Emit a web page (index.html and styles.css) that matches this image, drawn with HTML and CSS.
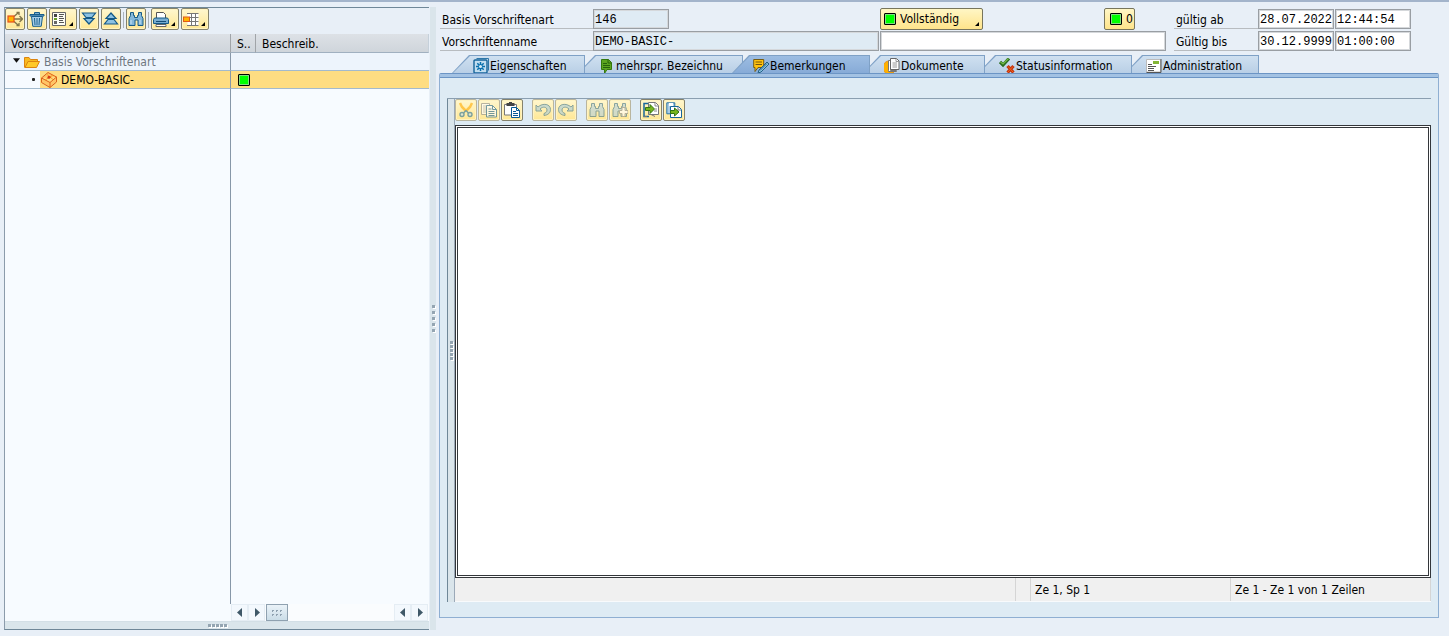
FILE: index.html
```html
<!DOCTYPE html>
<html lang="de">
<head>
<meta charset="utf-8">
<title>Vorschriften</title>
<link rel="stylesheet" href="styles.css">
</head>
<body>
<main class="app">
  <section class="tree-pane">
    <div class="tree-frame">
      <div class="tree-toolbar">
        <button class="tool" aria-label="Verschieben"><svg viewBox="0 0 16 16"><path d="M7 5.500L11 2M9.500 1.500H12V4M7 8h8M12.500 5L15.500 8l-3 3M7 10.500l4 3.500M9.500 14.500H12V12" fill="none" stroke="#80754a" stroke-width="1.300"/><rect x="1" y="5" width="6" height="6" fill="#ffb400" stroke="#e8501c" stroke-width="1.200"/></svg></button>
        <button class="tool" aria-label="Löschen"><svg viewBox="0 0 16 16"><path d="M2.500 5.500h11l-1.300 9.800H3.800z" fill="#a9d0ea" stroke="#185f8c"/><path d="M1 3.500h14v1.500H1zM5.500 3.500v-2h5v2" fill="#7db0d3" stroke="#185f8c"/><path d="M5.500 7l.5 7M8 7v7M10.500 7l-.5 7" stroke="#185f8c" fill="none"/></svg></button>
        <button class="tool tool-menu" aria-label="Legende"><svg viewBox="0 0 16 16"><path d="M1.500 1.500h13v13h-13z" fill="#fdfdf5" stroke="#666"/><path d="M3 3h3v3H3z" fill="#444"/><path d="M3 7h3v2H3z" fill="#68a026"/><path d="M3 10h3v3H3z" fill="#666"/><path d="M8 3.500h5M8 5.500h4M8 7.500h5M8 9.500h4M8 11.500h5" stroke="#555"/></svg></button>
        <button class="tool" aria-label="Alles expandieren"><svg viewBox="0 0 16 16"><path d="M1.500 2h13l-3.500 4.500H5z M3 7.500h10L8 13z" fill="#8cc2e4" stroke="#145987" stroke-width="1.200"/></svg></button>
        <button class="tool" aria-label="Alles komprimieren"><svg viewBox="0 0 16 16"><path d="M8 2l5 5.500H3z M5 8.500h6l3.500 4.500h-13z" fill="#8cc2e4" stroke="#145987" stroke-width="1.200"/></svg></button>
        <span class="separator"></span>
        <button class="tool" aria-label="Suchen"><svg viewBox="0 0 16 16"><path d="M2.500 1.500h3v3h1v2h3v-2h1v-3h3v3l1.500 3v7h-5V9h-3v5.500H1v-7l1.500-3z" fill="#83b7da" stroke="#155a87"/><path d="M3 9v4M12 9v4" stroke="#c9e3f3"/></svg></button>
        <span class="separator"></span>
        <button class="tool tool-menu" aria-label="Drucken"><svg viewBox="0 0 16 16"><path d="M3.500 7V1.500h7l2 2V7" fill="#fff" stroke="#555"/><path d="M1.500 7h13l1 1.500v4H.5v-4z" fill="#78acd0" stroke="#155a87"/><path d="M3 10.500h10" stroke="#164d75"/><path d="M3 13.500h10v2H3z" fill="#fff" stroke="#666"/></svg></button>
        <button class="tool tool-menu" aria-label="Layout"><svg viewBox="0 0 16 16"><path d="M4.500 2.500h11v12h-11z" fill="#fff"/><path d="M4 2.500h11.500M6 6.500h9.500M6 10.500h9.500M4 14.500h11.500M8.500 2v13M12.500 2v13" stroke="#777" fill="none"/><rect x=".5" y="6" width="6" height="4.500" fill="#ffb400" stroke="#e05a1c"/></svg></button>
      </div>
      <table class="tree">
        <colgroup><col class="col-object"><col class="col-status"><col></colgroup>
        <thead><tr><th>Vorschriftenobjekt</th><th>S..</th><th>Beschreib.</th></tr></thead>
        <tbody>
          <tr><td><span class="node node-root"><svg class="caret" viewBox="0 0 8 5"><path d="M0 0h8L4 5z" fill="#111"/></svg><svg class="icon" viewBox="0 0 16 16"><path d="M.5 13.500v-10H5l1.500 2h7v2" fill="#f9b91f" stroke="#dc8410"/><path d="M1 13.500l3-6h11.500l-3 6z" fill="#ffc928" stroke="#dc8410"/></svg>Basis Vorschriftenart</span></td><td></td><td></td></tr>
          <tr class="selected"><td><span class="node node-leaf"><span class="dot"></span><span class="leaf-body"><svg class="icon" viewBox="0 0 16 16"><path d="M.5 6L7 .5 15.500 5 9 10.500zM.5 6v4.500L9 15.500l6.500-5.500V5M9 10.500v5" fill="#ffc566" stroke="#db621b"/><path d="M6 2.500l6 5M12 3L4 8" stroke="#f39a27"/><circle cx="8" cy="5.300" r="1.500" fill="#d63c15"/></svg>DEMO-BASIC-</span></span></td><td><span class="lamp"></span></td><td></td></tr>
        </tbody>
      </table>
      <div class="tree-space"><div class="tree-space-object"></div><div class="tree-space-rest"></div></div>
      <div class="tree-scroll">
        <div class="scroll-gap"></div>
        <button class="arrow" aria-label="Nach links"><svg viewBox="0 0 6 9"><path d="M5 0v9L0 4.500z"/></svg></button>
        <button class="arrow" aria-label="Nach rechts"><svg viewBox="0 0 6 9"><path d="M1 0v9l5-4.500z"/></svg></button>
        <span class="thumb"><i></i><i></i><i></i><i></i><i></i><i></i></span>
        <span class="track"></span>
        <button class="arrow" aria-label="Ende links"><svg viewBox="0 0 6 9"><path d="M5 0v9L0 4.500z"/></svg></button>
        <button class="arrow" aria-label="Ende rechts"><svg viewBox="0 0 6 9"><path d="M1 0v9l5-4.500z"/></svg></button>
      </div>
      <div class="split-bottom"><span class="grip grip-row"><i></i><i></i><i></i><i></i><i></i></span></div>
    </div>
  </section>
  <div class="split-main"><span class="grip grip-column"><i></i><i></i><i></i><i></i><i></i></span></div>
  <section class="detail">
    <form class="head">
      <label class="caption" for="type">Basis Vorschriftenart</label>
      <input class="field locked short" id="type" value="146" readonly>
      <div class="actions">
        <button type="button" class="action action-state"><span class="lamp"></span>Vollständig</button>
        <button type="button" class="action action-count"><span class="lamp"></span>0</button>
      </div>
      <label class="caption" for="from">gültig ab</label>
      <input class="field spaced" id="from" value="28.07.2022">
      <input class="field" value="12:44:54" aria-label="Uhrzeit ab">
      <label class="caption" for="name">Vorschriftenname</label>
      <input class="field locked spaced" id="name" value="DEMO-BASIC-" readonly>
      <input class="field description" aria-label="Beschreibung">
      <label class="caption" for="to">Gültig bis</label>
      <input class="field spaced" id="to" value="30.12.9999">
      <input class="field" value="01:00:00" aria-label="Uhrzeit bis">
    </form>
    <nav class="tabs" role="tablist">
      <button class="tab tab-properties" role="tab"><svg class="icon" viewBox="0 0 16 16"><path d="M3.500.5h12v12" fill="none" stroke="#2d77a8"/><rect x="1" y="2" width="13" height="13" rx="1" fill="#c3def0" stroke="#14649a" stroke-width="1.400"/><path d="M7.500 4v9M3 8.500h9M4.300 5.300l6.400 6.400M10.700 5.300l-6.400 6.400" stroke="#0870ae" stroke-width="1.500"/><circle cx="7.500" cy="8.500" r="1.500" fill="#d9ecf7"/></svg>Eigenschaften</button>
      <button class="tab tab-names" role="tab"><svg class="icon" viewBox="0 0 16 16"><path d="M2.500 1.500h7l3 3v7H8l-2.500 4v-4h-3z" fill="#5ca51f" stroke="#34790d"/><path d="M9 1.500v3.500h3.500M4 5.500h4M4 7.500h7M4 9.500h7" stroke="#26630b" fill="none"/></svg>mehrspr. Bezeichnu</button>
      <button class="tab tab-notes active" role="tab" aria-selected="true"><svg class="icon" viewBox="0 0 16 16"><path d="M.7 1.500h10v8H5l-3 4v-4H.7z" fill="#ffc20e" stroke="#765c14"/><path d="M2.500 4h6.500M2.500 6.500h6.500" stroke="#76560b"/><path d="M14 4l2 2-8 8-3 1 1-3z" fill="#8cc5e4" stroke="#246085"/><path d="M7 12.500l7-7" stroke="#246085"/></svg>Bemerkungen</button>
      <button class="tab tab-documents" role="tab"><svg class="icon" viewBox="0 0 16 16"><path d="M5 3a6.500 6.500 0 1 0 5 11H5z" fill="#ffb000" stroke="#e5931c"/><path d="M4.500 12.500v-10h2v10h6v1h-8z" fill="#fff" stroke="#777"/><path d="M6.500.5h6l2.500 2.500v8.500H6.500z" fill="#fff" stroke="#666"/><path d="M12 1v2.500h3M8.500 5h4.500M8.500 7h4.500M8.500 9h4.500" fill="none" stroke="#999"/></svg>Dokumente</button>
      <button class="tab tab-status" role="tab"><svg class="icon" viewBox="0 0 16 16"><path d="M1 4l3 3 6-6.500" fill="none" stroke="#286b20" stroke-width="3.200"/><path d="M1.500 4l2.500 2 5.500-5.500" fill="none" stroke="#73b947" stroke-width="1.300"/><path d="M8.500 8l6 6.500M14.500 8l-6 6.500" stroke="#c5330b" stroke-width="3.200"/><path d="M9 8.500l5 5.500M14 8.500l-5 5.500" stroke="#ee6420"/></svg>Statusinformation</button>
      <button class="tab tab-admin" role="tab"><svg class="icon" viewBox="0 0 16 16"><path d="M.5 1.500h14v12.500H.5z" fill="#fff" stroke="#bbb"/><path d="M.5 14.500h14.500V1" fill="none" stroke="#555"/><path d="M7 3h6v3H7z" fill="#83b636"/><path d="M2 6.500h4M2 8.500h8M2 10.500h6M2 12.500h6" stroke="#555"/></svg>Administration</button>
    </nav>
    <div class="panel">
      <div class="panel-inner">
        <div class="split-inner"><span class="grip grip-column small"><i></i><i></i><i></i><i></i><i></i></span></div>
        <div class="editor">
          <div class="editor-toolbar">
            <div class="group">
              <button class="tool dim" aria-label="Ausschneiden"><svg viewBox="0 0 16 16"><path d="M2 1l2 4 4 4M14 1l-2 4-4 4" fill="none" stroke="#ffab00" stroke-width="2.500"/><path d="M8 8.500L5.500 11M8 8.500l2.500 2.500" stroke="#246f98" stroke-width="1.600"/><circle cx="4" cy="12.500" r="2" fill="#cbe2ed" stroke="#246f98" stroke-width="1.400"/><circle cx="12" cy="12.500" r="2" fill="#cbe2ed" stroke="#246f98" stroke-width="1.400"/></svg></button>
              <button class="tool dim" aria-label="Kopieren"><svg viewBox="0 0 16 16"><path d="M.5 1.500h8v11h-8z" fill="#fff" stroke="#888"/><path d="M2 4h4M2 6h3M2 8h3M2 10h3" stroke="#aaa"/><path d="M5.500 3.500h6l4 4v7.500h-10z" fill="#fff" stroke="#165f8e"/><path d="M11.500 3.500v4h4M7.500 7h3M7.500 9.500h6M7.500 11.500h6M7.500 13.500h6" stroke="#165f8e" fill="none"/></svg></button>
              <button class="tool" aria-label="Einfügen"><svg viewBox="0 0 16 16"><path d="M.5 2.500h12V13H.5z" fill="#fff" stroke="#777"/><path d="M2.500 1h8v3h-8zM5 0h3v2H5z" fill="#444"/><path d="M7.500 5.500h5l3 3v7h-8z" fill="#fff" stroke="#075a96"/><path d="M12.500 5.500v3h3M9 9.500h3M9 11.500h5M9 13.500h5" stroke="#075a96" fill="none"/></svg></button>
            </div>
            <div class="group">
              <button class="tool dim" aria-label="Rückgängig"><svg viewBox="0 0 16 16"><path d="M1 3v6h6L5 7c3-3 7-2 7 1 0 2-1.500 3-3 3.500v2c4-.5 6.500-2.500 6.500-6C15.500 2 8 .5 3 5z" fill="#a9cbd8" stroke="#3d7186"/></svg></button>
              <button class="tool dim" aria-label="Wiederherstellen"><svg viewBox="0 0 16 16"><path d="M15 3v6H9l2-2C8 4 4 5 4 8c0 2 1.500 3 3 3.500v2C3 13 .5 11 .5 7.500.5 2 8 .5 13 5z" fill="#a9cbd8" stroke="#3d7186"/></svg></button>
            </div>
            <div class="group">
              <button class="tool dim" aria-label="Suchen"><svg viewBox="0 0 16 16"><path d="M2.500 1.500h3v3h1v2h3v-2h1v-3h3v3l1.500 3v7h-5V9h-3v5.500H1v-7l1.500-3z" fill="#b5d0dc" stroke="#3d7186"/></svg></button>
              <button class="tool dim" aria-label="Weitersuchen"><svg viewBox="0 0 16 16"><path d="M2.500 1.500h3v3h1v2h3v-2h1v-3h3v3l1 3v7H9V9H6v5.500H1v-7l1.500-3z" fill="#b5d0dc" stroke="#3d7186"/><path d="M10 5.500h3v3h3v3h-3v3h-3v-3H7.500v-3H10z" fill="#fff" stroke="#888"/></svg></button>
            </div>
            <div class="group">
              <button class="tool" aria-label="Laden"><svg viewBox="0 0 16 16"><path d="M5 1.500H1v13h5" fill="none" stroke="#17669b" stroke-width="1.500"/><path d="M5.500.5h7l3 3v9h-10z" fill="#fff" stroke="#777"/><path d="M12 1v3h3M12 7h2M11 9h3" stroke="#888" fill="none"/><path d="M2.500 5.500H7v-3L11.500 7 7 11.500v-3H2.500z" fill="#77b61d" stroke="#327510"/><path d="M8 12.500l4 2M1 14.500h3" stroke="#777"/></svg></button>
              <button class="tool" aria-label="Sichern"><svg viewBox="0 0 16 16"><path d="M.8.800h8v11h-8z" fill="#a9cce6" stroke="#2c75a6"/><path d="M3 1h4v3H3z" fill="#fff"/><path d="M4.500 4.500h8l3 3v8h-11z" fill="#fff" stroke="#17669b"/><path d="M12 5v3h3" stroke="#777" fill="none"/><path d="M4.500 8.500h4V6L13 10l-4.500 4v-2.500h-4z" fill="#77b61d" stroke="#327510"/></svg></button>
            </div>
          </div>
          <textarea class="text" aria-label="Bemerkungen"></textarea>
          <footer class="status"><span class="status-main"></span><span class="status-gap"></span><span class="status-position">Ze 1, Sp 1</span><span class="status-lines">Ze 1 - Ze 1 von 1 Zeilen</span></footer>
        </div>
      </div>
    </div>
  </section>
</main>
</body>
</html>
```
FILE: styles.css
```css
* { box-sizing: border-box; }
body { margin: 0; background: #e8eff7; color: #000; font: 12px/16px "DejaVu Sans Condensed", Tahoma, sans-serif; }
button, input, textarea { font: inherit; color: inherit; margin: 0; border-radius: 0; }
button { padding: 0; }
svg { display: block; flex: none; }
.app { display: flex; height: 100vh; min-height: 300px; border-top: 2px solid #a3b4cb; padding: 5px 0 6px 4px; }

.tree-pane { flex: 0 0 425px; display: flex; }
.tree-frame { flex: 1; display: flex; flex-direction: column; border-top: 1px solid #6f8798; border-left: 1px solid #8b9bab; border-bottom: 1px solid #6f8798; }
.tree-toolbar { display: flex; gap: 2px; height: 26px; }
.tool { position: relative; display: flex; align-items: center; width: 20px; height: 22px; padding: 0 1px; border: 1px solid #85826c; border-radius: 2px; background: linear-gradient(#fff7cf, #ffe793); box-shadow: inset 0 0 0 1px #fff3c0; }
.tool svg { width: 16px; height: 16px; }
.tool-menu { width: 28px; }
.tool-menu::after { content: ""; position: absolute; right: 3px; bottom: 3px; border: 2px solid #000; border-top-color: transparent; border-left-color: transparent; }
.separator { width: 1px; height: 16px; margin-top: 4px; background: #aab2ba; }

.tree { width: 100%; border-collapse: separate; border-spacing: 0; table-layout: fixed; }
.tree th { height: 19px; padding: 2px 0 0 6px; line-height: 16px; font-weight: normal; text-align: left; background: linear-gradient(#dde1e6, #cfd5db); border-right: 1px solid #a0a4a8; border-bottom: 1px solid #a0b0c0; }
.tree td { height: 18px; padding: 0; background: #edf4fc; border-bottom: 1px solid #a3bacd; }
.tree td:first-child { border-right: 1px solid #8797a8; }
.tree th:last-child { border-right: 1px solid #c5d0da; }
.col-object { width: 226px; }
.col-status { width: 25px; }
.node { display: flex; align-items: center; height: 17px; }
.node-root { padding-left: 8px; gap: 4px; color: #6f7780; }
.caret { width: 7px; height: 5px; margin-bottom: 2px; }
.icon { width: 16px; height: 16px; }
.node-leaf { padding-left: 27px; gap: 5px; }
.dot { width: 3px; height: 3px; background: #222; border-radius: 1px; }
.leaf-body { display: flex; flex: 1; height: 17px; align-items: center; gap: 4px; padding-left: 1px; background: #fedd82; }
.tree .selected td { background: #fedd82; }
.tree .selected td:first-child { background: #f6faff; }
.lamp { display: block; flex: none; width: 12px; height: 12px; background: #0f0; border: 1px solid #000; border-radius: 1px; box-shadow: inset 0 0 0 1px #7fe07f; }
.tree .lamp { margin-left: 7px; }
.tree-space { flex: 1; display: grid; grid-template-columns: 226px 1fr; background: #f7fbff; }
.tree-space-object { border-right: 1px solid #8797a8; }
.tree-scroll { display: flex; height: 17px; padding-right: 1px; background: #fafcfe; }
.scroll-gap { width: 226px; background: #f7fbff; }
.arrow { display: grid; place-items: center; width: 17px; border: 1px solid #e5edf4; background: #f3f8fd; }
.arrow svg { width: 6px; height: 9px; fill: #3f5868; }
.thumb { display: grid; grid-template-columns: repeat(3, 2px); gap: 2px; place-content: center; width: 22px; margin-left: 1px; border: 1px solid #8fa1b0; background: linear-gradient(#eaf2f8, #cbdde8); }
.thumb i { width: 2px; height: 2px; border-left: 1px solid #8fa1b0; border-top: 1px solid #8fa1b0; }
.track { flex: 1; }
.split-bottom { display: grid; place-items: center; height: 8px; border-top: 1px solid #d3dfe6; background: #dae5eb; }
.grip { display: flex; gap: 1px; }
.grip i { width: 3px; height: 3px; background: #94a5b2; box-shadow: 1px 1px #fff; }
.grip-column { flex-direction: column; gap: 3px; }
.grip-column.small { gap: 1px; }
.split-main { flex: 0 0 6px; display: grid; place-items: center; margin-left: 1px; background: #dae5eb; }

.detail { flex: 1; min-width: 0; display: flex; flex-direction: column; padding: 1px 10px 12px 3px; }
.head { display: grid; grid-template-columns: 153px 287px 294px 84px 77px 76px; grid-auto-rows: 22px; padding-left: 1px; margin-bottom: 3px; }
.caption { height: 21px; padding: 4px 0 0 2px; border-bottom: 1px solid #b8bcc0; line-height: 16px; }
.field { width: 100%; height: 20px; margin-top: 1px; padding: 2px 0 0 1px; border: 1px solid #999ea3; background: #fff; box-shadow: inset 0 0 0 1px #d5d8db; font: 12px/16px "Liberation Mono", monospace; outline: 0; }
.field.spaced { width: calc(100% - 1px); }
.field.short { width: 76px; }
.locked { background: #dfebf4; }
.description { width: 286px; }
.actions { display: flex; justify-content: space-between; padding-right: 39px; }
.action { position: relative; display: flex; align-items: center; gap: 4px; height: 22px; padding: 0 3px; border: 1px solid #78755c; border-radius: 2px; background: linear-gradient(#fff6c5, #ffe48b); }
.action-state { width: 103px; }
.action-state::after { content: ""; position: absolute; right: 3px; bottom: 3px; border: 2px solid #000; border-top-color: transparent; border-left-color: transparent; }
.action-count { width: 31px; padding-left: 5px; }

.tabs { display: flex; height: 18px; padding-left: 13px; }
.tab { position: relative; display: flex; align-items: center; gap: 1px; height: 18px; margin-left: -7px; padding: 3px 0 0 21px; border: 0; background: #7fa1c6; clip-path: polygon(0 100%, 17px 0, 100% 0, 100% 100%); white-space: nowrap; isolation: isolate; }
.tab::before { content: ""; position: absolute; z-index: -1; inset: 1px 1px 0 1px; background: linear-gradient(#cfe0f0, #b9cfe6); clip-path: polygon(0 100%, 17px 0, 100% 0, 100% 100%); }
.tab.active::before { background: linear-gradient(#9dbde2, #87abd7); }
.tab-properties { width: 133px; margin-left: 0; z-index: 6; }
.tab-names { width: 165px; z-index: 5; }
.tab-notes { width: 138px; margin-left: -11px; z-index: 7; }
.tab-documents { width: 122px; z-index: 4; }
.tab-status { width: 154px; z-index: 3; }
.tab-admin { width: 134px; z-index: 2; }

.panel { flex: 1; min-height: 0; display: flex; flex-direction: column; border: 1px solid #8fafd2; border-top-color: #6c95c5; border-radius: 2px 2px 0 0; background: #deebf4; }
.panel::before { content: ""; height: 3px; background: #a3c2e3; border-bottom: 1px solid #6c95c5; }
.panel-inner { flex: 1; min-width: 0; display: flex; margin: 20px 7px 15px; border-top: 1px solid #8b9fb0; }
.split-inner { flex: 0 0 7px; display: grid; place-items: center; border-left: 1px solid #6f8798; background: #dae5eb; }
.editor { flex: 1; min-width: 0; display: flex; flex-direction: column; border-left: 1px solid #9ba9b8; }
.editor-toolbar { display: flex; gap: 9px; height: 26px; }
.group { display: flex; gap: 1px; }
.editor-toolbar .tool { width: 22px; padding: 0 2px; }
.tool.dim { border-color: #b9b59e; }
.dim svg { opacity: .6; }
.text { flex: 1; display: block; width: 100%; resize: none; outline: 0; padding: 3px; background: #fff; border: 3px double #33363a; }
.status { display: flex; height: 24px; background: #f0f0f0; border-bottom: 1px solid #f8fafc; line-height: 25px; }
.status span { padding-left: 4px; border-right: 1px solid #d5d5d5; }
.status-main { flex: 1; }
.status-gap { width: 15px; }
.status-position { width: 200px; }
.status-lines { width: 200px; }
```
